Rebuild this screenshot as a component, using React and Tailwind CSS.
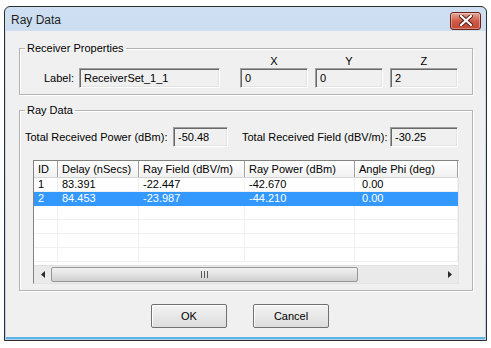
const rows = [
  { id: '1', delay: '83.391', field: '-22.447', power: '-42.670', phi: ' 0.00' },
  { id: '2', delay: '84.453', field: '-23.987', power: '-44.210', phi: ' 0.00', selected: true },
]

const cols = [
  { key: 'id', label: 'ID', w: 'w-[24px]' },
  { key: 'delay', label: 'Delay (nSecs)', w: 'w-[81px]' },
  { key: 'field', label: 'Ray Field (dBV/m)', w: 'w-[106px]' },
  { key: 'power', label: 'Ray Power (dBm)', w: 'w-[110px]' },
  { key: 'phi', label: 'Angle Phi (deg)', w: 'flex-1' },
]

const sunken =
  'border border-t-[#a0a0a0] border-l-[#a0a0a0] border-r-white border-b-white shadow-[inset_1px_1px_0_#696969,inset_-1px_-1px_0_#e3e3e3]'

function Field({ value, className = '' }) {
  return (
    <div className={`h-[20px] bg-[#f0f0f0] ${sunken} pl-[4px] leading-[18px] ${className}`}>
      {value}
    </div>
  )
}

function Group({ title, className = '', children }) {
  return (
    <fieldset className={`border border-[#b4b4b4] shadow-[1px_1px_0_white,inset_1px_1px_0_white] ${className}`}>
      <legend className="ml-[5px] px-[2px] leading-[13px]">{title}</legend>
      {children}
    </fieldset>
  )
}

function Button({ children }) {
  return (
    <button className="w-[76px] h-[24px] rounded-[2px] border border-[#707070] bg-gradient-to-b from-[#f4f4f4] to-[#dcdcdc] shadow-[inset_1px_1px_0_white] leading-[20px]">
      {children}
    </button>
  )
}

export default function App() {
  return (
    <div className="w-[491px] h-[348px] bg-white pt-[6px] pl-[4px] text-[11px] text-black font-['Liberation_Sans',Arial,sans-serif]">
      <div className="w-[483px] h-[335px] border border-[#2d2d2d] rounded-t-[6px] bg-gradient-to-b from-[#cfdff2] to-[#b7cfea] flex flex-col">
        {/* Title bar */}
        <div className="h-[24px] flex items-center pl-[6px] pr-[5px] shrink-0">
          <span className="text-[12px] text-[#1e1e1e] mt-[2px]">Ray Data</span>
          <div className="ml-auto mt-[3px] w-[31px] h-[18px] rounded-[3px] border border-[#6b2118] bg-gradient-to-b from-[#e3a79a] via-[#cf5a47] to-[#c24a35] shadow-[inset_0_0_0_1px_rgba(255,255,255,0.35)] flex items-center justify-center">
            <svg width="14" height="11" viewBox="0 0 14 11">
              <path d="M2 1 L12 10 M12 1 L2 10" stroke="#4a1a14" strokeWidth="4" strokeLinecap="square" />
              <path d="M2 1 L12 10 M12 1 L2 10" stroke="white" strokeWidth="2.2" strokeLinecap="square" />
            </svg>
          </div>
        </div>

        {/* Client area */}
        <div className="flex-1 mx-[1px] mb-[1px] bg-[#f0f0f0] border-b-2 border-b-[#5ab6e4] flex flex-col px-[13px]">
          <Group title="Receiver Properties" className="mt-[11px] w-[454px] pb-[6px]">
            <div className="flex items-end">
              <span className="pl-[24px] pr-[5px] leading-[20px]">Label:</span>
              <Field value="ReceiverSet_1_1" className="w-[141px]" />
              <div className="ml-[20px] flex gap-[7px]">
                {[['X', '0'], ['Y', '0'], ['Z', '2']].map(([l, v]) => (
                  <div key={l} className="w-[68px] flex flex-col">
                    <span className="text-center leading-[13px]">{l}</span>
                    <Field value={v} />
                  </div>
                ))}
              </div>
            </div>
          </Group>

          <Group title="Ray Data" className="mt-[9px] w-[454px] pb-[6px]">
            <div className="flex items-center mt-[10px] pl-[5px]">
              <span className="w-[148px]">Total Received Power (dBm):</span>
              <Field value="-50.48" className="w-[55px]" />
              <span className="ml-[14px] w-[148px]">Total Received Field (dBV/m):</span>
              <Field value="-30.25" className="w-[68px]" />
            </div>

            <div className="mt-[13px] ml-[13px] w-[426px] h-[124px] bg-white border border-t-[#828282] border-l-[#828282] border-r-[#e3e3e3] border-b-[#e3e3e3] flex flex-col">
              {/* Header */}
              <div className="h-[17px] flex bg-gradient-to-b from-white to-[#f1f1f1] border-b border-[#d5d5d5] shrink-0">
                {cols.map((c) => (
                  <div
                    key={c.key}
                    className={`${c.w} border-r border-r-[#a0a0a0] shadow-[1px_0_0_white] pl-[4px] leading-[16px]`}
                  >
                    {c.label}
                  </div>
                ))}
              </div>

              {/* Rows */}
              <div className="flex-1 flex flex-col overflow-hidden">
                {[...rows, {}, {}, {}, {}].map((r, i) => (
                  <div
                    key={i}
                    className={`h-[14px] flex shrink-0 border-b ${
                      r.selected ? 'bg-[#3399ff] text-white border-[#3399ff]' : 'border-[#f0f0f0]'
                    }`}
                  >
                    {cols.map((c) => (
                      <div
                        key={c.key}
                        className={`${c.w} border-r ${r.selected ? 'border-[#3399ff]' : 'border-[#f0f0f0]'} pl-[4px] leading-[13px] whitespace-pre`}
                      >
                        {r[c.key] || ''}
                      </div>
                    ))}
                  </div>
                ))}
              </div>

              {/* Horizontal scrollbar */}
              <div className="h-[18px] flex bg-[#eaeaea] border-t border-[#e0e0e0] shrink-0">
                <div className="w-[17px] flex items-center justify-center">
                  <svg width="4" height="7" viewBox="0 0 4 7"><path d="M4 0 L0 3.5 L4 7 Z" fill="#2a2a2a" /></svg>
                </div>
                <div className="w-[307px] my-[1px] rounded-[2px] border border-[#979797] bg-gradient-to-b from-[#f2f2f2] via-[#e2e2e2] to-[#cfcfcf] flex items-center justify-center">
                  <svg width="7" height="7" viewBox="0 0 7 7">
                    <path d="M0.5 0 V7 M3.5 0 V7 M6.5 0 V7" stroke="#5a5a5a" strokeWidth="1" />
                  </svg>
                </div>
                <div className="flex-1" />
                <div className="w-[17px] flex items-center justify-center">
                  <svg width="4" height="7" viewBox="0 0 4 7"><path d="M0 0 L4 3.5 L0 7 Z" fill="#2a2a2a" /></svg>
                </div>
              </div>
            </div>
          </Group>

          <div className="mt-[13px] flex gap-[26px] pl-[132px]">
            <Button>OK</Button>
            <Button>Cancel</Button>
          </div>
        </div>
      </div>
    </div>
  )
}
